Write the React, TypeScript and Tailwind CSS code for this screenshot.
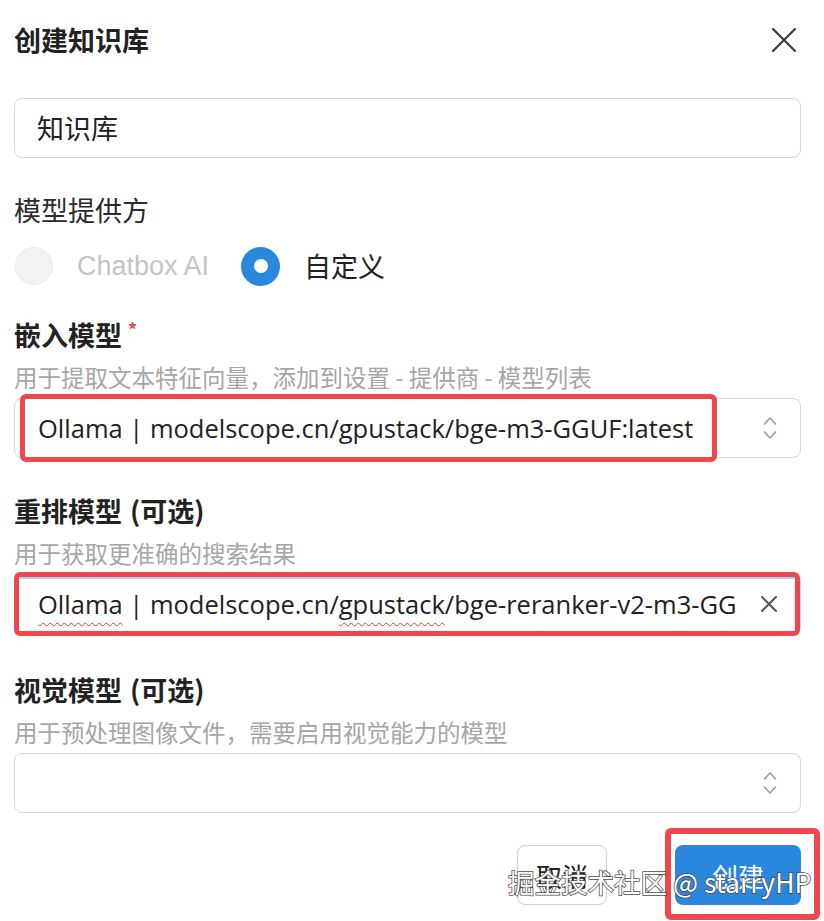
import type { ReactNode } from "react";

const cjk = "font-['Noto_Sans_CJK_SC','Noto_Sans',sans-serif]";
const latin = "font-['Open_Sans','Noto_Sans_CJK_SC',sans-serif]";

function UpDown() {
  return (
    <svg width="16" height="28" viewBox="0 0 16 28" fill="none" stroke="#9a9a9a" strokeWidth="1.6" strokeLinecap="round" strokeLinejoin="round">
      <path d="M2.5 10l5.5-6 5.5 6" />
      <path d="M2.5 18l5.5 6 5.5-6" />
    </svg>
  );
}

function Field({ label, optional, required, hint, children }: { label: string; optional?: boolean; required?: boolean; hint: string; children: ReactNode }) {
  return (
    <div className="flex flex-col">
      <div className="h-[32px] flex items-center text-[27px] font-semibold text-[#222] leading-none">
        <span>{label}</span>
        {optional && <span className="ml-[8px]">(可选)</span>}
        {required && <span className="ml-[6px] text-[18px] text-[#e5484d] self-start mt-[2px]">*</span>}
      </div>
      <div className="mt-[14px] h-[28px] flex items-center text-[23.5px] text-[#a6a6a6] leading-none">{hint}</div>
      <div className="mt-[6px]">{children}</div>
    </div>
  );
}

export default function App() {
  return (
    <div className={`relative w-[824px] h-[921px] overflow-hidden bg-white pl-[14px] pr-[23px] ${cjk}`}>
      {/* Header */}
      <div className="h-[80px] flex items-center justify-between">
        <h1 className="text-[27px] font-semibold text-[#222]">创建知识库</h1>
        <svg width="26" height="26" viewBox="0 0 26 26" className="mr-[4px]" stroke="#3a3a3a" strokeWidth="2.2" strokeLinecap="round">
          <path d="M2 2l22 22M24 2L2 24" />
        </svg>
      </div>

      {/* Name */}
      <div className="mt-[18px] h-[60px] rounded-[8px] border border-[#d6d6d6] flex items-center px-[22px] text-[27px] text-[#222]">
        知识库
      </div>

      {/* Provider */}
      <div className="mt-[36px] h-[32px] flex items-center text-[27px] text-[#2a2a2a]">模型提供方</div>
      <div className="mt-[20px] h-[40px] flex items-center">
        <span className="w-[38px] h-[38px] rounded-full bg-[#f3f3f3] border border-[#ebebeb] ml-[1px]" />
        <span className="ml-[24px] text-[27px] text-[#c4c4c4] font-['Liberation_Sans',sans-serif]">Chatbox AI</span>
        <span className="ml-[32px] w-[39px] h-[39px] rounded-full bg-[#2a88dc] flex items-center justify-center">
          <span className="w-[14px] h-[14px] rounded-full bg-white" />
        </span>
        <span className="ml-[24px] text-[27px] text-[#222]">自定义</span>
      </div>

      <div className="mt-[32px] flex flex-col">
        <Field label="嵌入模型" required hint="用于提取文本特征向量，添加到设置 - 提供商 - 模型列表">
          <div className="relative h-[60px] rounded-[8px] border border-[#d6d6d6] flex items-center justify-between pl-[23px] pr-[22px]">
            <span className={`${latin} text-[25.5px] text-[#222] whitespace-nowrap`}>Ollama | modelscope.cn/gpustack/bge-m3-GGUF:latest</span>
            <UpDown />
            <div className="absolute left-[5px] top-[-5px] w-[697px] h-[68px] border-[5px] border-[#f0474c] rounded-[6px]" />
          </div>
        </Field>

        <div className="mt-[36px]">
          <Field label="重排模型" optional hint="用于获取更准确的搜索结果">
            <div className="relative h-[60px] rounded-[8px] border border-[#d6d6d6] flex items-center justify-between pl-[23px] pr-[22px]">
              <span className={`${latin} text-[25.5px] text-[#222] whitespace-nowrap`}>
                <span className="underline decoration-wavy decoration-[#e53935] decoration-1 underline-offset-[8px]">Ollama</span>
                {" | modelscope.cn/"}
                <span className="underline decoration-wavy decoration-[#e53935] decoration-1 underline-offset-[8px]">gpustack</span>
                /bge-reranker-v2-m3-GG
              </span>
              <svg width="18" height="18" viewBox="0 0 18 18" stroke="#555" strokeWidth="2" strokeLinecap="round">
                <path d="M2 2l14 14M16 2L2 16" />
              </svg>
              <div className="absolute left-[-1px] right-[0px] top-[-3px] bottom-[-3px] border-[5px] border-[#f0474c] rounded-[6px]">
                <div className="h-[2px] bg-[#a6d6ea]" />
              </div>
            </div>
          </Field>
        </div>

        <div className="mt-[39px]">
          <Field label="视觉模型" optional hint="用于预处理图像文件，需要启用视觉能力的模型">
            <div className="h-[60px] rounded-[8px] border border-[#d6d6d6] flex items-center justify-end pr-[22px]">
              <UpDown />
            </div>
          </Field>
        </div>
      </div>

      {/* Footer */}
      <div className="mt-[32px] flex justify-end">
        <button className="w-[90px] h-[60px] rounded-[8px] border border-[#cfcfcf] bg-white text-[26px] text-[#222]">取消</button>
        <div className="relative ml-[68px]">
          <button className="w-[126px] h-[60px] rounded-[8px] bg-[#2a87de] text-[26px] text-white">创建</button>
          <div className="absolute left-[-10px] right-[-19px] top-[-17px] bottom-[-15px] border-[6px] border-[#f0474c] rounded-[6px]" />
        </div>
      </div>

      {/* Watermark */}
      <div className="absolute left-[508px] top-[864px] text-[26.5px] leading-[36px] text-white whitespace-nowrap [-webkit-text-stroke:1.5px_#4a4a4a] [paint-order:stroke_fill]">
        掘金技术社区 @ starryHP
      </div>
    </div>
  );
}
